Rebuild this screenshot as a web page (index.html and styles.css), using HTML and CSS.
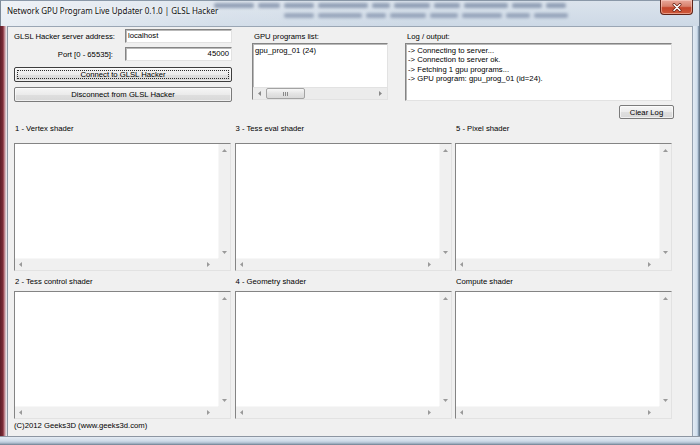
FILE: index.html
```html
<!DOCTYPE html>
<html>
<head>
<meta charset="utf-8">
<title>Network GPU Program Live Updater</title>
<link rel="stylesheet" href="styles.css">
</head>
<body>
<div class="window">
  <div class="titlebar">
    <span class="title">Network GPU Program Live Updater 0.1.0 | GLSL Hacker</span>
    <div class="glass">
      <div class="streaks s1"><i class="w40"></i><i class="w22"></i><i class="w30"></i><i class="w50"></i><i class="w18"></i><i class="w36"></i><i class="w26"></i><i class="w44"></i><i class="w30"></i><i class="w20"></i></div>
      <div class="streaks s2"><i class="w30"></i><i class="w44"></i><i class="w20"></i><i class="w36"></i><i class="w28"></i><i class="w40"></i><i class="w24"></i><i class="w34"></i></div>
    </div>
    <div class="close">
      <svg width="12" height="9" viewBox="0 0 12 9"><path d="M3 1.5L9 7.5M9 1.5L3 7.5" stroke="#6a2014" stroke-width="3" stroke-linecap="round"/><path d="M3 1.5L9 7.5M9 1.5L3 7.5" stroke="#ffffff" stroke-width="1.5" stroke-linecap="round"/></svg>
    </div>
  </div>
  <div class="frame">
    <div class="border-left"></div>
    <div class="client">
      <div class="top">
        <div class="conn">
          <div class="field-row">
            <span class="lbl">GLSL Hacker server address:</span>
            <div class="edit single">localhost</div>
          </div>
          <div class="field-row second">
            <span class="lbl right">Port [0 - 65535]:</span>
            <div class="edit single num">45000</div>
          </div>
          <div class="btn default"><span class="focus">Connect to GLSL Hacker</span></div>
          <div class="btn disc">Disconnect from GLSL Hacker</div>
        </div>
        <div class="progs">
          <div class="cap">GPU programs list:</div>
          <div class="listbox edit">
            <div class="items">gpu_prog_01 (24)</div>
            <div class="lhscroll">
              <span class="abtn"><svg width="3" height="5" viewBox="0 0 3 5"><path d="M3 0L0 2.5L3 5Z" fill="#8a8a8a"/></svg></span>
              <span class="thumb"><svg width="7" height="4" viewBox="0 0 7 4"><path d="M1.5 0V4M3.5 0V4M5.5 0V4" stroke="#8a8a8a" stroke-width="1"/></svg></span>
              <span class="fill"></span>
              <span class="abtn"><svg width="3" height="5" viewBox="0 0 3 5"><path d="M0 0L3 2.5L0 5Z" fill="#8a8a8a"/></svg></span>
            </div>
          </div>
        </div>
        <div class="logcol">
          <div class="cap">Log / output:</div>
          <div class="edit logbox">
            <div>-&gt; Connecting to server...</div>
            <div>-&gt; Connection to server ok.</div>
            <div>-&gt; Fetching 1 gpu programs...</div>
            <div>-&gt; GPU program: gpu_prog_01 (id=24).</div>
          </div>
          <div class="btn clear">Clear Log</div>
        </div>
      </div>

      <div class="shaders">
        <div class="cell">
          <div class="cap scap">1 - Vertex shader</div>
          <div class="code edit">
            <div class="area"></div>
            <div class="vbar"><svg width="5" height="3" viewBox="0 0 5 3"><path d="M0 3L2.5 0L5 3Z" fill="#9a9a9a"/></svg><svg width="5" height="3" viewBox="0 0 5 3"><path d="M0 0L2.5 3L5 0Z" fill="#9a9a9a"/></svg></div>
            <div class="hbar"><svg width="3" height="5" viewBox="0 0 3 5"><path d="M3 0L0 2.5L3 5Z" fill="#9a9a9a"/></svg><svg width="3" height="5" viewBox="0 0 3 5"><path d="M0 0L3 2.5L0 5Z" fill="#9a9a9a"/></svg></div>
            <div class="corner"></div>
          </div>
        </div>
        <div class="cell">
          <div class="cap scap">3 - Tess eval shader</div>
          <div class="code edit">
            <div class="area"></div>
            <div class="vbar"><svg width="5" height="3" viewBox="0 0 5 3"><path d="M0 3L2.5 0L5 3Z" fill="#9a9a9a"/></svg><svg width="5" height="3" viewBox="0 0 5 3"><path d="M0 0L2.5 3L5 0Z" fill="#9a9a9a"/></svg></div>
            <div class="hbar"><svg width="3" height="5" viewBox="0 0 3 5"><path d="M3 0L0 2.5L3 5Z" fill="#9a9a9a"/></svg><svg width="3" height="5" viewBox="0 0 3 5"><path d="M0 0L3 2.5L0 5Z" fill="#9a9a9a"/></svg></div>
            <div class="corner"></div>
          </div>
        </div>
        <div class="cell">
          <div class="cap scap">5 - Pixel shader</div>
          <div class="code edit">
            <div class="area"></div>
            <div class="vbar"><svg width="5" height="3" viewBox="0 0 5 3"><path d="M0 3L2.5 0L5 3Z" fill="#9a9a9a"/></svg><svg width="5" height="3" viewBox="0 0 5 3"><path d="M0 0L2.5 3L5 0Z" fill="#9a9a9a"/></svg></div>
            <div class="hbar"><svg width="3" height="5" viewBox="0 0 3 5"><path d="M3 0L0 2.5L3 5Z" fill="#9a9a9a"/></svg><svg width="3" height="5" viewBox="0 0 3 5"><path d="M0 0L3 2.5L0 5Z" fill="#9a9a9a"/></svg></div>
            <div class="corner"></div>
          </div>
        </div>
        <div class="cell">
          <div class="cap scap lower">2 - Tess control shader</div>
          <div class="code edit">
            <div class="area"></div>
            <div class="vbar"><svg width="5" height="3" viewBox="0 0 5 3"><path d="M0 3L2.5 0L5 3Z" fill="#9a9a9a"/></svg><svg width="5" height="3" viewBox="0 0 5 3"><path d="M0 0L2.5 3L5 0Z" fill="#9a9a9a"/></svg></div>
            <div class="hbar"><svg width="3" height="5" viewBox="0 0 3 5"><path d="M3 0L0 2.5L3 5Z" fill="#9a9a9a"/></svg><svg width="3" height="5" viewBox="0 0 3 5"><path d="M0 0L3 2.5L0 5Z" fill="#9a9a9a"/></svg></div>
            <div class="corner"></div>
          </div>
        </div>
        <div class="cell">
          <div class="cap scap lower">4 - Geometry shader</div>
          <div class="code edit">
            <div class="area"></div>
            <div class="vbar"><svg width="5" height="3" viewBox="0 0 5 3"><path d="M0 3L2.5 0L5 3Z" fill="#9a9a9a"/></svg><svg width="5" height="3" viewBox="0 0 5 3"><path d="M0 0L2.5 3L5 0Z" fill="#9a9a9a"/></svg></div>
            <div class="hbar"><svg width="3" height="5" viewBox="0 0 3 5"><path d="M3 0L0 2.5L3 5Z" fill="#9a9a9a"/></svg><svg width="3" height="5" viewBox="0 0 3 5"><path d="M0 0L3 2.5L0 5Z" fill="#9a9a9a"/></svg></div>
            <div class="corner"></div>
          </div>
        </div>
        <div class="cell">
          <div class="cap scap lower">Compute shader</div>
          <div class="code edit">
            <div class="area"></div>
            <div class="vbar"><svg width="5" height="3" viewBox="0 0 5 3"><path d="M0 3L2.5 0L5 3Z" fill="#9a9a9a"/></svg><svg width="5" height="3" viewBox="0 0 5 3"><path d="M0 0L2.5 3L5 0Z" fill="#9a9a9a"/></svg></div>
            <div class="hbar"><svg width="3" height="5" viewBox="0 0 3 5"><path d="M3 0L0 2.5L3 5Z" fill="#9a9a9a"/></svg><svg width="3" height="5" viewBox="0 0 3 5"><path d="M0 0L3 2.5L0 5Z" fill="#9a9a9a"/></svg></div>
            <div class="corner"></div>
          </div>
        </div>
      </div>

      <div class="footer">(C)2012 Geeks3D (www.geeks3d.com)</div>
    </div>
    <div class="border-right"></div>
  </div>
  <div class="border-bottom"></div>
</div>
</body>
</html>
```

FILE: styles.css
```css
* { box-sizing: border-box; }
html, body { margin: 0; padding: 0; }
body {
  width: 700px;
  height: 445px;
  overflow: hidden;
  background: #c9d6e4;
  font-family: "Liberation Sans", Arial, sans-serif;
  font-size: 7.7px;
  color: #000;
}

.window {
  width: 700px;
  height: 445px;
  display: flex;
  flex-direction: column;
  background: linear-gradient(to bottom, #d3dde8, #cad7e5);
}

/* ---------- title bar ---------- */
.titlebar {
  height: 26px;
  flex: none;
  display: flex;
  align-items: flex-start;
  padding: 0 6px 0 6px;
  background:
    linear-gradient(to right, rgba(255,255,255,0.55), rgba(255,255,255,0.15) 30%, rgba(255,255,255,0) 60%),
    linear-gradient(to bottom, #dbe3ec, #cdd9e6);
  border-left: 1px solid #7d8a98;
  border-right: 1px solid #6f7f90;
  border-top: 1px solid #8a98a8;
}
.title {
  font-family: "Noto Sans", "Open Sans", sans-serif;
  font-size: 8px;
  line-height: 12px;
  margin-top: 4px;
  white-space: nowrap;
  color: #101010;
  text-shadow: 0 0 4px #ffffff, 0 0 6px rgba(255,255,255,0.9);
  flex: none;
}
.glass {
  flex: 1;
  height: 22px;
  margin-left: -4px;
  padding-top: 2px;
  display: flex;
  flex-direction: column;
  gap: 5px;
  filter: blur(1.8px);
  opacity: 0.5;
}
.streaks {
  display: flex;
  gap: 4px;
  height: 5px;
}
.streaks i {
  display: block;
  height: 5px;
  background: #4b5f82;
  border-radius: 2px;
}
.streaks.s2 { padding-left: 70px; opacity: 0.85; }
.w18 { width: 18px; } .w20 { width: 20px; } .w22 { width: 22px; } .w24 { width: 24px; }
.w26 { width: 26px; } .w28 { width: 28px; } .w30 { width: 30px; } .w34 { width: 34px; }
.w36 { width: 36px; } .w40 { width: 40px; } .w44 { width: 44px; } .w50 { width: 50px; }

.close {
  flex: none;
  width: 33px;
  height: 15px;
  margin-top: -1px;
  display: flex;
  align-items: center;
  justify-content: center;
  border: 1px solid #5e2318;
  border-top: none;
  border-radius: 0 0 4px 4px;
  background: linear-gradient(to bottom, #e9a89b 0%, #d8806c 45%, #c4452c 55%, #cf5a3a 100%);
  box-shadow: inset 0 0 0 1px rgba(255,220,210,0.5);
}

/* ---------- frame ---------- */
.frame {
  flex: 1;
  display: flex;
  min-height: 0;
}
.border-left {
  width: 8px;
  flex: none;
  background: linear-gradient(to right, #5e1e28 0, #7c2d38 3px, #b46a73 4px, #dfd3d8 6px, #eef0f3 7px, #8d96a2 7px);
}
.border-right {
  width: 8px;
  flex: none;
  background: linear-gradient(to right, #97a3b1 0, #97a3b1 1px, #e2ebf5 1px, #d2dfec 5px, #a8bdd3 6px, #6b7d90 7px);
}
.border-bottom {
  height: 9px;
  flex: none;
  background: linear-gradient(to bottom, #8d96a2 0, #8d96a2 1px, #e4ebf3 1px, #cfdbe8 5px, #aebfd0 7px, #6d7d8e 9px);
}

.client {
  flex: 1;
  background: #f0f0f0;
  display: flex;
  flex-direction: column;
  padding: 3px 0 0 6px;
  border-top: 1px solid #9aa6b4;
}

/* ---------- top section ---------- */
.top {
  display: flex;
  align-items: flex-start;
  margin-top: -1px;
}
.conn {
  width: 218px;
  display: flex;
  flex-direction: column;
}
.field-row {
  display: flex;
  align-items: center;
  height: 14px;
}
.field-row.second { margin-top: 4px; }
.lbl {
  width: 111px;
  flex: none;
  white-space: nowrap;
}
.lbl.right {
  text-align: right;
  padding-right: 12px;
}

.edit {
  background: #ffffff;
  border: 1px solid;
  border-color: #848484 #e2e2e2 #e2e2e2 #848484;
  box-shadow: inset 1px 1px 0 #b9b9b9;
}
.edit.single {
  width: 107px;
  height: 14px;
  line-height: 12px;
  padding: 0 2px;
  white-space: nowrap;
}
.edit.num { text-align: right; padding-right: 2px; }

.btn {
  height: 15px;
  display: flex;
  align-items: center;
  justify-content: center;
  border: 1px solid #7b7b7b;
  border-radius: 2px;
  background: linear-gradient(to bottom, #f6f6f6 0%, #ebebeb 50%, #dfdfdf 51%, #d8d8d8 100%);
  box-shadow: inset 0 0 0 1px rgba(255,255,255,0.6);
  white-space: nowrap;
}
.btn.default {
  margin-top: 6px;
  border-color: #3d3d3d;
  padding: 2px;
}
.focus {
  width: 100%;
  height: 100%;
  display: flex;
  align-items: center;
  justify-content: center;
  border: 1px dotted #2a2a2a;
}
.btn.disc { margin-top: 5px; }

.cap {
  line-height: 10px;
  height: 10px;
  white-space: nowrap;
}

.progs {
  width: 136px;
  margin-left: 20px;
  display: flex;
  flex-direction: column;
}
.progs .cap { margin-top: 3px; padding-left: 2px; }
.listbox {
  margin-top: 1px;
  height: 57px;
  display: flex;
  flex-direction: column;
}
.items {
  flex: 1;
  padding: 2px 0 0 2px;
  line-height: 10px;
}
.lhscroll {
  height: 12px;
  display: flex;
  align-items: stretch;
  background: #ececec;
  border-top: 1px solid #e2e2e2;
}
.abtn {
  width: 13px;
  flex: none;
  display: flex;
  align-items: center;
  justify-content: center;
}
.thumb {
  width: 39px;
  flex: none;
  display: flex;
  align-items: center;
  justify-content: center;
  border: 1px solid #a3a3a3;
  border-radius: 2px;
  background: linear-gradient(to bottom, #f7f7f7, #e4e4e4 50%, #d9d9d9);
}
.fill { flex: 1; }

.logcol {
  width: 269px;
  margin-left: 17px;
  display: flex;
  flex-direction: column;
}
.logcol .cap { margin-top: 3px; padding-left: 2px; }
.logbox {
  width: 267px;
  height: 58px;
  margin-top: 1px;
  padding: 2px 0 0 2px;
  line-height: 9.4px;
  white-space: nowrap;
}
.btn.clear {
  align-self: flex-end;
  width: 55px;
  height: 14px;
  margin-top: 4px;
}

/* ---------- shader editors ---------- */
.shaders {
  margin-top: 5px;
  display: grid;
  grid-template-columns: 217px 217px 217px;
  column-gap: 3.5px;
}
.cell {
  display: flex;
  flex-direction: column;
}
.scap {
  height: 19px;
  padding-left: 1px;
}
.scap.lower {
  height: 20px;
  padding-top: 6px;
}
.code {
  height: 128px;
  display: grid;
  grid-template-columns: 1fr 12px;
  grid-template-rows: 1fr 12px;
}
.area { background: #ffffff; }
.vbar {
  background: #f0f0f0;
  border-left: 1px solid #f7f7f7;
  display: flex;
  flex-direction: column;
  align-items: center;
  justify-content: space-between;
  padding: 5px 0 4px;
}
.hbar {
  background: #f0f0f0;
  border-top: 1px solid #f7f7f7;
  display: flex;
  align-items: center;
  justify-content: space-between;
  padding: 0 8px 0 4px;
}
.corner { background: #f0f0f0; }

.footer {
  margin-top: 2px;
  line-height: 10px;
  white-space: nowrap;
}
```
